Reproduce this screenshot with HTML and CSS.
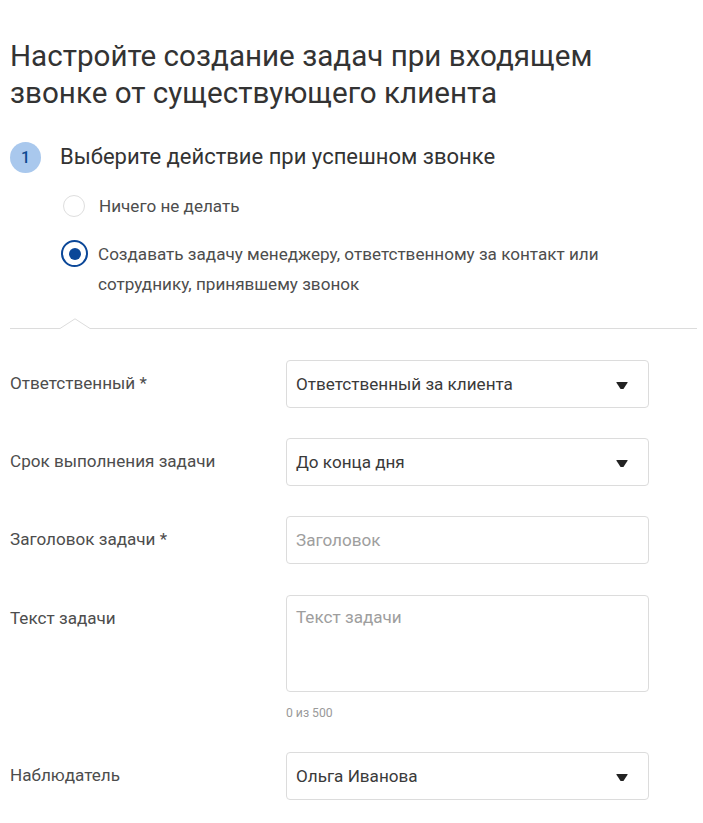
FILE: index.html
```html
<!DOCTYPE html>
<html lang="ru">
<head>
<meta charset="utf-8">
<link rel="stylesheet" href="styles.css">
</head>
<body>
<div class="page">
  <h1 class="title">Настройте создание задач при входящем звонке от существующего клиента</h1>

  <div class="step">
    <span class="step-num">1</span>
    <span class="step-title">Выберите действие при успешном звонке</span>
  </div>

  <div class="options">
    <div class="option">
      <span class="radio"></span>
      <span class="option-text">Ничего не делать</span>
    </div>
    <div class="option">
      <span class="radio checked"></span>
      <span class="option-text">Создавать задачу менеджеру, ответственному за контакт или сотруднику, принявшему звонок</span>
    </div>
  </div>

  <div class="divider">
    <div class="line line-left"></div>
    <svg class="notch" width="30" height="11" viewBox="0 0 30 11"><polyline points="0,10.5 15,0.8 30,10.5" fill="none" stroke="#dcdcdc" stroke-width="1"/></svg>
    <div class="line line-right"></div>
  </div>

  <div class="form">
    <div class="row">
      <div class="label">Ответственный *</div>
      <div class="field">
        <div class="control select"><span class="value">Ответственный за клиента</span><span class="caret"></span></div>
      </div>
    </div>
    <div class="row">
      <div class="label">Срок выполнения задачи</div>
      <div class="field">
        <div class="control select"><span class="value">До конца дня</span><span class="caret"></span></div>
      </div>
    </div>
    <div class="row">
      <div class="label">Заголовок задачи *</div>
      <div class="field">
        <div class="control"><span class="placeholder">Заголовок</span></div>
      </div>
    </div>
    <div class="row row-text">
      <div class="label">Текст задачи</div>
      <div class="field">
        <div class="control textarea"><span class="placeholder">Текст задачи</span></div>
        <div class="counter">0 из 500</div>
      </div>
    </div>
    <div class="row">
      <div class="label">Наблюдатель</div>
      <div class="field">
        <div class="control select"><span class="value">Ольга Иванова</span><span class="caret"></span></div>
      </div>
    </div>
  </div>
</div>
</body>
</html>
```

FILE: styles.css
```css
* { box-sizing: border-box; }

html, body {
  margin: 0;
  padding: 0;
  background: #ffffff;
}

body {
  font-family: Roboto, "Noto Sans", "Liberation Sans", sans-serif;
  color: #333333;
}

.page {
  padding: 38px 6px 0 10px;
}

.title {
  margin: 0;
  font-size: 29.6px;
  font-weight: 400;
  line-height: 37px;
  color: #333333;
  width: 640px;
}

.step {
  display: flex;
  align-items: center;
  margin-top: 29px;
  height: 32px;
}

.step-num {
  width: 31px;
  height: 31px;
  border-radius: 50%;
  background: #a9c8ed;
  color: #0d4a8f;
  font-size: 16px;
  font-weight: 500;
  display: flex;
  align-items: center;
  justify-content: center;
}

.step-title {
  margin-left: 19px;
  font-size: 22px;
  line-height: 28px;
  color: #333333;
}

.options {
  padding-left: 51px;
  margin-top: 18px;
}

.option {
  display: flex;
  align-items: flex-start;
  margin-bottom: 18px;
}

.option + .option {
  margin-bottom: 0;
}

.radio {
  flex: 0 0 auto;
  width: 22px;
  height: 22px;
  border-radius: 50%;
  border: 1.5px solid #dedede;
  margin: 4px 14px 0 2px;
  display: flex;
  align-items: center;
  justify-content: center;
  background: #fff;
}

.radio.checked {
  width: 27px;
  height: 27px;
  border: 2.5px solid #0b4798;
  margin: 1px 10px 0 0;
}

.radio.checked::after {
  content: "";
  width: 12px;
  height: 12px;
  border-radius: 50%;
  background: #0b4798;
}

.option-text {
  font-size: 17.1px;
  line-height: 30px;
  color: #4d4d4d;
  max-width: 560px;
}

.divider {
  display: flex;
  align-items: flex-end;
  margin-top: 19px;
  height: 11px;
}

.line {
  height: 1px;
  background: #dcdcdc;
  margin-bottom: 0.5px;
}

.line-left { width: 50px; }
.line-right { flex: 1; }

.notch { display: block; flex: 0 0 auto; }

.form {
  margin-top: 31px;
}

.row {
  display: flex;
  align-items: flex-start;
  margin-bottom: 30px;
}

.row-text {
  padding-top: 1px;
  margin-bottom: 32px;
}

.label {
  width: 276px;
  flex: 0 0 auto;
  font-size: 17.1px;
  line-height: 46px;
  color: #4d4d4d;
}

.field {
  width: 363px;
}

.control {
  height: 48px;
  border: 1px solid #dcdcdc;
  border-radius: 4px;
  display: flex;
  align-items: center;
  padding: 0 10px 0 9px;
  font-size: 17.1px;
  background: #fff;
}

.select {
  justify-content: space-between;
  padding-right: 20px;
}

.value { color: #3a3a3a; }

.placeholder { color: #9e9e9e; }

.textarea {
  height: 97px;
  align-items: flex-start;
  padding-top: 11px;
}

.caret {
  width: 12px;
  height: 7px;
  background: #222222;
  clip-path: polygon(0 0, 100% 0, 62% 100%, 38% 100%);
  border-radius: 1px;
  margin-top: 3px;
}

.counter {
  margin-top: 14px;
  font-size: 12.2px;
  line-height: 14px;
  color: #9a9a9a;
}
```
